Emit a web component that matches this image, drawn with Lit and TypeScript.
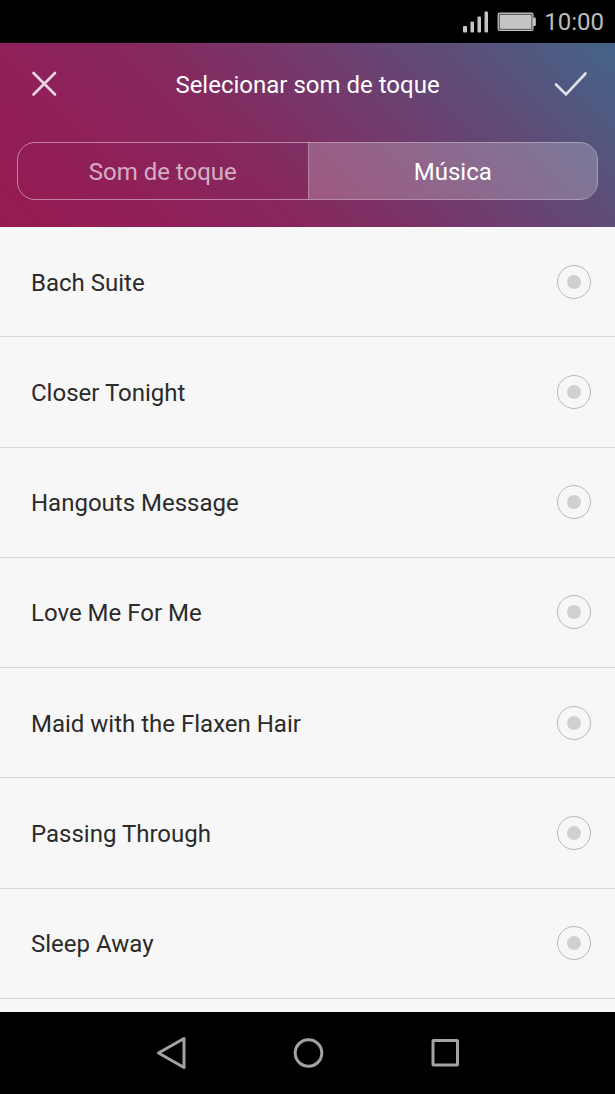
import { LitElement, html, css } from "lit";
import { customElement, state } from "lit/decorators.js";

const TRACKS = [
  "Bach Suite",
  "Closer Tonight",
  "Hangouts Message",
  "Love Me For Me",
  "Maid with the Flaxen Hair",
  "Passing Through",
  "Sleep Away",
];

@customElement("status-bar")
class StatusBar extends LitElement {
  static styles = css`
    :host {
      display: flex;
      align-items: center;
      justify-content: flex-end;
      gap: 8px;
      height: 43px;
      padding-right: 11px;
      box-sizing: border-box;
      background: #000;
      color: #bdbdbd;
      font-size: 24px;
      line-height: 30px;
    }
    svg {
      display: block;
      fill: #c4c4c4;
    }
  `;
  render() {
    return html`
      <svg width="27" height="24" viewBox="0 0 27 24" aria-hidden="true">
        <rect x="1" y="16" width="4" height="6.5" rx="1" />
        <rect x="8.5" y="11.5" width="3.5" height="11" rx="1" />
        <rect x="15.5" y="6.5" width="3.5" height="16" rx="1" />
        <rect x="22.5" y="1.5" width="3.5" height="21" rx="1" />
      </svg>
      <svg width="39" height="20" viewBox="0 0 39 20" aria-hidden="true">
        <rect x="0.6" y="0.6" width="36" height="18.3" rx="2" />
        <rect x="36" y="5.5" width="2.8" height="8.5" rx="1" />
        <rect x="2.3" y="2.3" width="32.6" height="15" fill="none" stroke="#444" stroke-width="0.9" />
      </svg>
      <span>10:00</span>
    `;
  }
}

@customElement("nav-bar")
class NavBar extends LitElement {
  static styles = css`
    :host {
      display: flex;
      justify-content: center;
      height: 82px;
      background: #000;
    }
    .keys {
      display: grid;
      grid-template-columns: repeat(3, 1fr);
      width: 67%;
    }
    button {
      display: grid;
      place-items: center;
      padding: 0;
      border: 0;
      background: none;
    }
    svg {
      fill: none;
      stroke: #a3a3a3;
      stroke-width: 3;
      stroke-linejoin: round;
    }
  `;
  render() {
    return html`
      <nav class="keys">
        <button aria-label="Voltar">
          <svg width="34" height="34" viewBox="0 0 34 34"><path d="M31 2.500v29L5.500 17z" /></svg>
        </button>
        <button aria-label="Início">
          <svg width="34" height="34" viewBox="0 0 34 34"><circle cx="18.500" cy="17" r="13.300" /></svg>
        </button>
        <button aria-label="Recentes">
          <svg width="34" height="34" viewBox="0 0 34 34"><rect x="5" y="4.500" width="24.500" height="24.500" rx="0.500" /></svg>
        </button>
      </nav>
    `;
  }
}

@customElement("app-root")
class AppRoot extends LitElement {
  @state() private tab = "music";

  static styles = css`
    :host {
      display: flex;
      flex-direction: column;
      min-height: 100vh;
      background: #f7f7f7;
      font-family: Roboto, "Liberation Sans", sans-serif;
      color: #2b2b2b;
    }
    button {
      padding: 0;
      border: 0;
      background: none;
      color: inherit;
      font: inherit;
    }
    .header {
      display: flex;
      flex-direction: column;
      gap: 16px;
      padding: 0 17px 27px;
      background: linear-gradient(
        45deg,
        #961a50 0%,
        #8f205a 23%,
        #86285e 40%,
        #703d6e 62%,
        #5d4d78 78%,
        #446489 100%
      );
      color: #fff;
    }
    .bar {
      display: grid;
      grid-template-columns: 54px 1fr 54px;
      align-items: center;
      height: 83px;
    }
    .title {
      margin: 0;
      font-size: 24px;
      line-height: 28px;
      font-weight: 400;
      text-align: center;
    }
    .action {
      display: grid;
      place-items: center;
      height: 54px;
    }
    .action svg {
      fill: none;
      stroke: #fff;
      stroke-opacity: 0.82;
      stroke-linecap: round;
    }
    .tabs {
      display: grid;
      grid-template-columns: 1fr 1fr;
      height: 58px;
      box-sizing: border-box;
      border: 1px solid rgba(255, 255, 255, 0.45);
      border-radius: 18px;
      overflow: hidden;
    }
    .tab {
      padding-top: 2px;
      font-size: 24px;
      line-height: 28px;
      color: rgba(255, 255, 255, 0.65);
    }
    .tab[aria-selected="true"] {
      background: rgba(255, 255, 255, 0.22);
      color: #fff;
    }
    .tab + .tab {
      border-left: 1px solid rgba(255, 255, 255, 0.25);
    }
    .list {
      flex: 1;
      display: flex;
      flex-direction: column;
      margin: 0;
      padding: 0 0 13px;
      list-style: none;
    }
    .item {
      flex: 1;
      display: flex;
      min-height: 72px;
      border-bottom: 1px solid #d9d9d9;
    }
    .row {
      flex: 1;
      display: flex;
      align-items: center;
      justify-content: space-between;
      padding: 0 24px 0 31px;
      font-size: 24px;
      line-height: 28px;
    }
    .name {
      padding-top: 2px;
    }
    .radio {
      appearance: none;
      display: grid;
      place-items: center;
      width: 34px;
      height: 34px;
      margin: 0;
      border: 1px solid #b8b8b8;
      border-radius: 50%;
    }
    .radio::before {
      content: "";
      width: 14px;
      height: 14px;
      border-radius: 50%;
      background: #d0d0d0;
    }
    .radio:checked::before {
      background: #8f205a;
    }
  `;

  private renderTab(id: string, label: string) {
    return html`<button
      class="tab"
      role="tab"
      aria-selected=${this.tab === id ? "true" : "false"}
      @click=${() => (this.tab = id)}
    >
      ${label}
    </button>`;
  }

  render() {
    return html`
      <status-bar></status-bar>
      <header class="header">
        <div class="bar">
          <button class="action" aria-label="Cancelar">
            <svg width="34" height="34" viewBox="0 0 34 34" stroke-width="2.6"><path d="M6.500 5l21.500 21.500M28 5L6.500 26.500" /></svg>
          </button>
          <h1 class="title">Selecionar som de toque</h1>
          <button class="action" aria-label="Confirmar">
            <svg width="34" height="34" viewBox="0 0 34 34" stroke-width="2.6"><path d="M2 16.500L12 26.500L31.500 5.500" /></svg>
          </button>
        </div>
        <div class="tabs" role="tablist">
          ${this.renderTab("ringtone", "Som de toque")} ${this.renderTab("music", "Música")}
        </div>
      </header>
      <ul class="list">
        ${TRACKS.map(
          (name) => html`<li class="item">
            <label class="row">
              <span class="name">${name}</span>
              <input class="radio" type="radio" name="track" value=${name} />
            </label>
          </li>`
        )}
      </ul>
      <nav-bar></nav-bar>
    `;
  }
}
